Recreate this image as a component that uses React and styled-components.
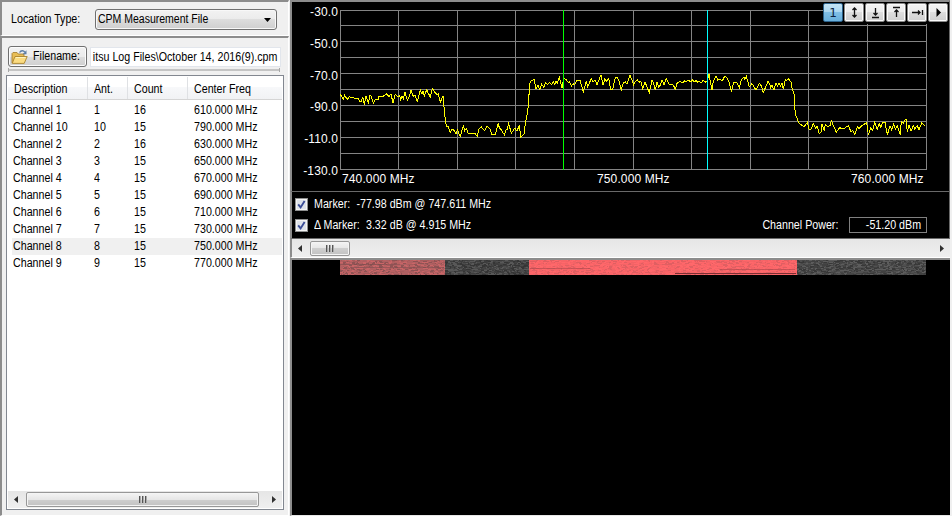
import React from 'react';
import styled, { createGlobalStyle, css } from 'styled-components';

const GlobalStyle = createGlobalStyle`
    * {
        box-sizing: border-box;
    }
    body {
        margin: 0;
        background: #f0f0f0;
        overflow: hidden;
    }
`;

const channels = [
    ['Channel 1', '1', '16', '610.000 MHz'],
    ['Channel 10', '10', '15', '790.000 MHz'],
    ['Channel 2', '2', '16', '630.000 MHz'],
    ['Channel 3', '3', '15', '650.000 MHz'],
    ['Channel 4', '4', '15', '670.000 MHz'],
    ['Channel 5', '5', '15', '690.000 MHz'],
    ['Channel 6', '6', '15', '710.000 MHz'],
    ['Channel 7', '7', '15', '730.000 MHz'],
    ['Channel 8', '8', '15', '750.000 MHz'],
    ['Channel 9', '9', '15', '770.000 MHz'],
];

const Window = styled.div`
    display: flex;
    width: 952px;
    height: 516px;
    background: #f0f0f0;
    color: #000;
    font-family: "Liberation Sans", Arial, sans-serif;
    font-size: 12px;
    line-height: 17px;
    white-space: nowrap;
`;

/* dialog text is a little narrower than plain Arial */
const Label = styled.span`
    display: inline-block;
    transform: scaleX(${({ $scale }) => $scale || 0.89});
    transform-origin: ${({ $from }) => $from || 'left'} center;
`;

/* ---------- left side ---------- */

const Sidebar = styled.div`
    display: flex;
    flex-direction: column;
    width: 290px;
`;

const sunken = css`
    border-style: solid;
    border-width: 2px 1px 1px 2px;
    border-color: #8c8c8c #fff #fff #8c8c8c;
`;

const LocationPanel = styled.div`
    ${sunken}
    display: flex;
    align-items: center;
    width: 289px;
    height: 36px;
    padding: 2px 0 0 9px;
`;

const LocationLabel = styled.div`
    width: 84px;
`;

const Select = styled.div`
    display: flex;
    align-items: center;
    justify-content: space-between;
    width: 182px;
    height: 21px;
    padding: 0 5px 0 2px;
    border: 1px solid #707070;
    border-radius: 3px;
    background: linear-gradient(#f2f2f2, #ebebeb 50%, #dddddd 50%, #cfcfcf);
    box-shadow: inset 0 0 0 1px #f8f8f8;
`;

const FilePanel = styled.div`
    ${sunken}
    flex: 1;
    width: 289px;
    padding: 8px 0 0 4px;
`;

const FileRow = styled.div`
    display: flex;
    gap: 3px;
    padding-left: 2px;
`;

const FileButton = styled.button`
    display: flex;
    align-items: center;
    gap: 5px;
    width: 79px;
    height: 21px;
    padding: 0 0 0 2px;
    border: 1px solid #707070;
    border-radius: 3px;
    background: linear-gradient(#f2f2f2, #ebebeb 50%, #dddddd 50%, #cfcfcf);
    box-shadow: inset 0 0 0 1px #fcfcfc;
    color: #000;
    font: inherit;

    svg {
        flex: none;
    }
`;

const PathField = styled.div`
    display: flex;
    justify-content: flex-end;
    align-items: center;
    width: 191px;
    height: 20px;
    margin-top: 1px;
    padding-right: 3px;
    border: 1px solid #e2e6ec;
    background: #fff;
`;

const Splitter = styled.div`
    display: flex;
    align-items: center;
    width: 272px;
    height: 4px;
    margin: 1px 0 3px 2px;
    border: solid #a8a8a8;
    border-width: 0 1px;

    &::before {
        content: '';
        flex: 1;
        height: 2px;
        background: #c4c4c4;
    }
`;

const ListView = styled.div`
    display: flex;
    flex-direction: column;
    width: 278px;
    height: 435px;
    border: 1px solid #828790;
    background: #fff;
    padding: 1px;
`;

const ListRow = styled.div`
    display: grid;
    grid-template-columns: 81px 40px 60px 1fr;
    height: 17px;
    margin-left: 4px;
    padding-left: 1px;
    background: ${({ $selected }) => ($selected ? '#f0f0f0' : 'transparent')};
`;

const ListHeader = styled.div`
    display: grid;
    grid-template-columns: 80px 40px 60px 1fr;
    height: 23px;
    margin-bottom: 2px;
    border-bottom: 1px solid #d5d5d5;
    background: linear-gradient(#fff 45%, #f7f8fa 45%, #f1f2f4);
`;

const HeaderCell = styled.div`
    padding: 4px 0 0 6px;
    border-right: ${({ $last }) => ($last ? 'none' : '1px solid #dfe1e4')};
`;

/* ---------- scroll bars ---------- */

const ScrollTrack = styled.div`
    display: flex;
    align-items: center;
    height: ${({ $height }) => $height}px;
    margin-top: auto;
    padding: 0 6px;
    background: linear-gradient(#e6e6e6, #efefef);
`;

const ScrollThumb = styled.div`
    display: flex;
    align-items: center;
    justify-content: center;
    gap: 1px;
    width: ${({ $width }) => $width}px;
    height: 15px;
    margin: 0 auto 0 ${({ $offset }) => $offset}px;
    border: 1px solid #979797;
    border-radius: 2px;
    background: linear-gradient(#f4f4f4, #e6e6e6 50%, #cfcfcf 50%, #c2c2c2);
    box-shadow: inset 0 0 0 1px #f4f4f4;
`;

const Grip = styled.i`
    width: 2px;
    height: 7px;
    background: linear-gradient(90deg, #555 50%, #aaa 50%);
`;

/* ---------- right side ---------- */

const Main = styled.div`
    display: flex;
    flex-direction: column;
    width: 662px;
    padding-right: 2px;
`;

const SpectrumPanel = styled.div`
    position: relative;
    height: 192px;
    border-style: solid;
    border-width: 2px 1px 1px 2px;
    border-color: #8c8c8c #696969 #696969 #8c8c8c;
    background: #000;
`;

const Plot = styled.svg`
    display: block;
    text {
        fill: #fff;
        font-size: 12px;
        letter-spacing: 0.12px;
    }
`;

/* floats over the top right corner of the plot */
const Toolbar = styled.div`
    position: absolute;
    top: 1px;
    right: 0;
    display: flex;
    gap: 1px;
    padding: 0 1px 2px 0;
    background: #000;
`;

const ToolButton = styled.button`
    display: flex;
    align-items: center;
    justify-content: center;
    width: 20px;
    height: 19px;
    padding: 0;
    border: 1px solid ${({ $active }) => ($active ? '#2c628b' : '#8a8a8a')};
    border-radius: 2px;
    background: ${({ $active }) =>
        $active
            ? 'linear-gradient(#c5e4f5, #a9d6f0 50%, #80bfe6 50%, #69b0dc)'
            : 'linear-gradient(#f4f4f4, #ececec 50%, #dedede 50%, #d0d0d0)'};
    box-shadow: ${({ $active }) => ($active ? 'none' : 'inset 0 0 0 1px #fcfcfc')};
`;

const ToolDigit = styled.span`
    font-family: "DejaVu Sans", sans-serif;
    font-size: 12px;
    color: #0c2340;
`;

const MarkerPanel = styled.div`
    display: flex;
    justify-content: space-between;
    align-items: flex-end;
    height: 47px;
    padding: 0 22px 4px 3px;
    border-style: solid;
    border-width: 0 1px 1px 2px;
    border-color: #696969 #696969 #696969 #8c8c8c;
    background: #000;
    color: #fff;
`;

const MarkerList = styled.div`
    display: flex;
    flex-direction: column;
    gap: 4px;
`;

const MarkerRow = styled.div`
    display: flex;
    align-items: center;
    gap: 6px;
    height: 17px;
`;

const MarkerValue = styled.span`
    margin-left: 7px;
`;

const CheckBox = styled.span`
    display: flex;
    width: 13px;
    height: 13px;
    border: 1px solid #8e8f8f;
    background: #dfe3ea;
    box-shadow: inset 0 0 0 1px #f4f4f4;
`;

const PowerRow = styled.div`
    display: flex;
    align-items: flex-start;
    gap: 11px;
    height: 17px;
`;

const PowerBox = styled.div`
    width: 78px;
    height: 16px;
    padding-right: 5px;
    border: 1px solid #808080;
    line-height: 15px;
    text-align: right;
`;

const PlotScroll = styled.div`
    height: 19px;
    border-left: 2px solid #8c8c8c;
    border-bottom: 1px solid #fff;
`;

const WaterfallPanel = styled.div`
    flex: 1;
    border-style: solid;
    border-width: 2px 0 1px 2px;
    border-color: #8c8c8c #8c8c8c #e8e8e8;
    background: #000;
`;

/* trace points, three units per pixel, each run has its own x origin */
const traceRuns = [
    [288, '157,283 161,290 166,298 170,286 178,299 184,290 190,294 194,291 198,294 211,296 215,305 220,304 224,290 229,314 234,288 241,309 246,285 249,288 256,310 262,299 270,299 273,288 279,290 285,289 295,282 303,290 309,282 315,308 322,283 330,290 335,287 338,299 342,288 346,297 351,277 358,301 364,290 369,271 376,289 382,287 388,304 397,269 402,283 405,274 409,287 416,269 421,280 427,291 433,266 444,281 447,284 451,281 457,306 465,288 470,345 475,378 481,380 487,397 492,388 498,391 504,401 508,389 512,399 517,409 526,377 530,392 535,386 541,400 547,402 560,400 568,409 573,386 580,381 590,392 597,379 606,388 612,404 622,404 631,368 634,384 640,390 649,404'],
    [500, '19,388 21,391 26,371 34,400 44,385 51,393 58,376 62,411 72,402 76,370 82,340 86,310 88,260 91,244 102,238 108,268 114,256 119,268 125,253 131,262 137,248 142,253 149,248 155,253 160,246 164,254 168,244 172,248 178,232 186,264 191,236 198,238 205,248 208,244 214,258 219,251 224,254 229,243 240,240 250,276 259,242 263,260 274,236 279,246 285,240 291,254 303,224 309,256 314,238 320,244 326,236 332,268 338,267 346,233 352,232 357,242 364,270 370,248 376,246 381,252 390,225 401,254 405,245 412,240 417,247 422,243 428,265 435,246 448,278 456,240 461,252 466,270 471,246 476,261 481,256 486,240 492,254 499,236 508,254 514,252 520,256 526,267 532,248 541,245 548,249 553,241 556,246 566,241 572,246 578,239 582,246 588,242 593,247 598,244 604,248 610,241 616,247 621,243 627,222 636,271 640,244 648,228 653,240 660,237'],
    [720, '6,244 14,229 20,232 27,247 34,273 42,246 50,247 58,264 64,240 72,231 74,238 79,229 88,260 96,251 108,270 118,250 124,258 130,278 144,244 149,252 152,264 156,256 162,271 168,248 173,258 177,248 182,258 186,249 190,267 196,239 199,242 206,236 213,247 217,268 222,282 226,342 237,369 252,381 262,367 267,388 272,389 280,371 287,384 291,378 298,401 303,395 306,372 313,392 316,373 323,380 330,377 334,362 340,376 349,397 359,383 370,387 385,377 393,395 398,391 404,404 412,380 417,385 425,378 440,367 445,404 452,384 458,391 464,368 472,388 478,371 482,382 488,366 495,366 502,405 510,377 515,390 521,372 526,388 532,378 541,405 544,364 550,370 558,356 562,396 567,375 573,394 580,377 584,387 592,377 597,390 605,369 614,377'],
];

// the second and third runs are joined by the samples between x=720 and x=722
const tracePoints = traceRuns
    .map(([origin, run]) =>
        run
            .split(' ')
            .map((p) => {
                const [x, y] = p.split(',').map(Number);
                return `${(origin + x / 3).toFixed(1)},${(y / 3).toFixed(1)}`;
            })
            .join(' ')
    )
    .join(' ');

const gridX = [340, 398, 457, 515, 574, 633, 691, 750, 808, 867, 926];
const gridY = [10, 25, 41, 57, 73, 89, 105, 121, 137, 153, 169];
const levels = ['-30.0', '-50.0', '-70.0', '-90.0', '-110.0', '-130.0'];

function Spectrum() {
    return (
        <Plot width="657" height="189" viewBox="292 2 657 189">
            <g fill="#848484" shapeRendering="crispEdges">
                {gridX.map((x) => (
                    <rect key={x} x={x} y="10" width="1" height="160" />
                ))}
                {gridY.map((y) => (
                    <rect key={y} x="340" y={y} width="587" height="1" />
                ))}
            </g>
            <polyline
                points={tracePoints}
                fill="none"
                stroke="#ffff00"
                strokeWidth="1"
                shapeRendering="crispEdges"
            />
            <rect x="563" y="10" width="1" height="160" fill="#00ff00" />
            <rect x="707" y="10" width="1" height="160" fill="#00ffff" />
            {levels.map((level, i) => (
                <text key={level} x="338" y={Math.round(16 + i * 31.8)} textAnchor="end">
                    {level}
                </text>
            ))}
            <text x="342" y="183">740.000 MHz</text>
            <text x="597" y="183">750.000 MHz</text>
            <text x="851" y="183">760.000 MHz</text>
        </Plot>
    );
}

const bands = [
    { from: 340, to: 445, shades: ['#8f5354', '#a85b5c', '#b96162', '#c96567', '#b06062'] },
    { from: 445, to: 529, shades: ['#353535', '#434343', '#4c4c4c', '#585858', '#3d3d3d'] },
    { from: 529, to: 797, shades: ['#e05f62', '#f76467', '#fd6568', '#ff686b', '#f26366'] },
    { from: 797, to: 926, shades: ['#383838', '#464646', '#505050', '#5c5c5c', '#414141'] },
];

// short horizontal dashes in a few shades, same pattern on every load
function noisePaths() {
    let seed = 7;
    const next = () => {
        seed = (seed * 16807) % 2147483647;
        return seed / 2147483647;
    };
    const paths = {};
    bands.forEach(({ from, to, shades }) => {
        for (let y = 260; y < 275; y++) {
            let x = from;
            while (x < to) {
                const w = Math.min(to - x, 1 + Math.floor(next() * 3));
                const shade = shades[Math.floor(next() * shades.length)];
                paths[shade] = (paths[shade] || '') + `M${x} ${y}h${w}v1h-${w}z`;
                x += w;
            }
        }
    });
    return Object.entries(paths);
}

function Waterfall() {
    return (
        <svg width="657" height="15" viewBox="292 260 657 15" display="block" shapeRendering="crispEdges">
            {noisePaths().map(([shade, d]) => (
                <path key={shade} d={d} fill={shade} />
            ))}
            <path d="M340 264h60v1h-60zM350 267h94v1h-94z" fill="#7d4c4e" opacity="0.6" />
            <path d="M530 268h60v1h-60zM720 269h75v1h-75z" fill="#a04448" opacity="0.55" />
            <path d="M675 273h121v1H675z" fill="#7c2f33" />
        </svg>
    );
}

function ScrollArrow({ dir }) {
    return (
        <svg width="4" height="7" viewBox="0 0 4 7">
            <path d={dir === 'left' ? 'M4 0v7L0 3.5z' : 'M0 0v7l4-3.5z'} fill="#303030" />
        </svg>
    );
}

function ScrollBar({ height, thumb, offset }) {
    return (
        <ScrollTrack $height={height}>
            <ScrollArrow dir="left" />
            <ScrollThumb $width={thumb} $offset={offset}>
                <Grip />
                <Grip />
                <Grip />
            </ScrollThumb>
            <ScrollArrow dir="right" />
        </ScrollTrack>
    );
}

function FolderIcon() {
    return (
        <svg width="17" height="16" viewBox="0 0 17 16">
            <path d="M1 14V4.5l1-1h4l1.2 1.5H13V8" fill="#e8bd55" stroke="#a17a2b" strokeWidth="0.8" />
            <path d="M1.2 14.4 4 7.5h12.2l-3 6.9z" fill="#fbdc82" stroke="#a9832f" strokeWidth="0.9" />
            <path d="M4.8 8.5h9.8" stroke="#fff3c0" />
            <path d="M8.5 3.5c1.5-2.3 4-2.3 5.3-.3" fill="none" stroke="#5d7ea6" strokeWidth="1.3" />
            <path d="M15.5 1.2v4h-4z" fill="#5d7ea6" />
        </svg>
    );
}

const toolIcons = [
    { name: 'span', path: 'M7.5 3v9M5.5 5l2-2 2 2M5.5 10l2 2 2-2' },
    { name: 'down', path: 'M7.5 3v7M5.5 8l2 2 2-2M4 12.5h7' },
    { name: 'up', path: 'M7.5 12V5M5.5 7l2-2 2 2M4 2.5h7' },
    { name: 'right', path: 'M2 7.5h8M8 5.5l2 2-2 2M12.5 5v5' },
];

function Tools() {
    return (
        <Toolbar>
            <ToolButton $active>
                <ToolDigit>1</ToolDigit>
            </ToolButton>
            {toolIcons.map(({ name, path }) => (
                <ToolButton key={name}>
                    <svg width="15" height="15" viewBox="0 0 15 15">
                        <path d={path} fill="none" stroke="#111" strokeWidth="1.3" />
                    </svg>
                </ToolButton>
            ))}
            <ToolButton>
                <svg width="15" height="15" viewBox="0 0 15 15">
                    <path d="M5.5 3v9l4.5-4.5z" fill="#000" />
                </svg>
            </ToolButton>
        </Toolbar>
    );
}

function Check() {
    return (
        <CheckBox>
            <svg width="11" height="11" viewBox="0 0 11 11">
                <path d="M2.2 5.4l2.4 3L8.6 2" fill="none" stroke="#3b4d97" strokeWidth="1.9" />
            </svg>
        </CheckBox>
    );
}

export default function App() {
    return (
        <Window>
            <GlobalStyle />
            <Sidebar>
                <LocationPanel>
                    <LocationLabel>
                        <Label>Location Type:</Label>
                    </LocationLabel>
                    <Select>
                        <Label $scale={0.875}>CPM Measurement File</Label>
                        <svg width="7" height="4" viewBox="0 0 7 4">
                            <path d="M0 0h7L3.5 4z" />
                        </svg>
                    </Select>
                </LocationPanel>
                <FilePanel>
                    <FileRow>
                        <FileButton>
                            <FolderIcon />
                            <Label>Filename:</Label>
                        </FileButton>
                        <PathField>
                            <Label $from="right">itsu Log Files\October 14, 2016(9).cpm</Label>
                        </PathField>
                    </FileRow>
                    <Splitter />
                    <ListView>
                        <ListHeader>
                            <HeaderCell><Label>Description</Label></HeaderCell>
                            <HeaderCell><Label>Ant.</Label></HeaderCell>
                            <HeaderCell><Label>Count</Label></HeaderCell>
                            <HeaderCell $last><Label>Center Freq</Label></HeaderCell>
                        </ListHeader>
                        {channels.map((row) => (
                            <ListRow key={row[0]} $selected={row[0] === 'Channel 8'}>
                                {row.map((cell, i) => (
                                    <Label key={i}>{cell}</Label>
                                ))}
                            </ListRow>
                        ))}
                        <ScrollBar height={17} thumb={233} offset={8} />
                    </ListView>
                </FilePanel>
            </Sidebar>
            <Main>
                <SpectrumPanel>
                    <Spectrum />
                    <Tools />
                </SpectrumPanel>
                <MarkerPanel>
                    <MarkerList>
                        <MarkerRow>
                            <Check />
                            <Label>Marker:<MarkerValue>-77.98 dBm @ 747.611 MHz</MarkerValue></Label>
                        </MarkerRow>
                        <MarkerRow>
                            <Check />
                            <Label>Δ Marker:<MarkerValue>3.32 dB @ 4.915 MHz</MarkerValue></Label>
                        </MarkerRow>
                    </MarkerList>
                    <PowerRow>
                        <Label $from="right">Channel Power:</Label>
                        <PowerBox>
                            <Label $from="right">-51.20 dBm</Label>
                        </PowerBox>
                    </PowerRow>
                </MarkerPanel>
                <PlotScroll>
                    <ScrollBar height={18} thumb={40} offset={8} />
                </PlotScroll>
                <WaterfallPanel>
                    <Waterfall />
                </WaterfallPanel>
            </Main>
        </Window>
    );
}
